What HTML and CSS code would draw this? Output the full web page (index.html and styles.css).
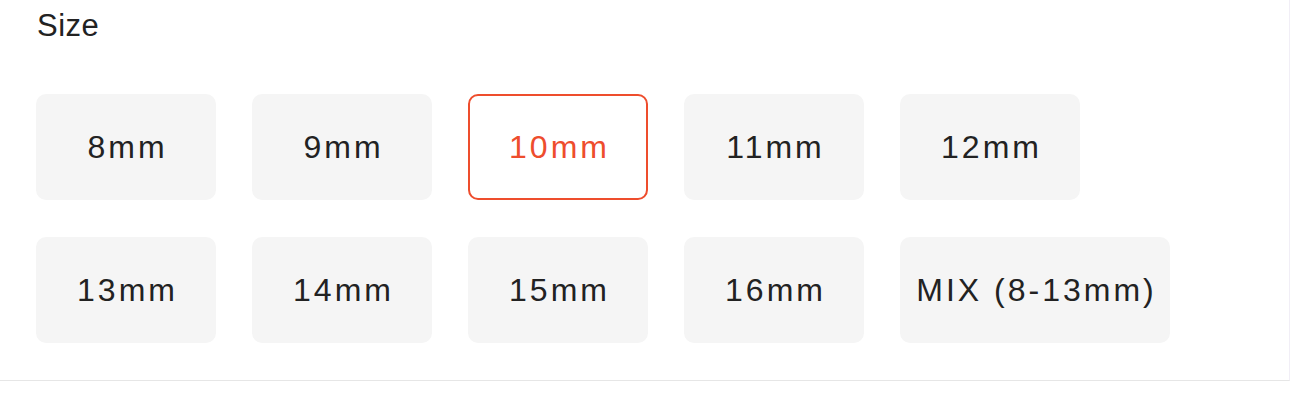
FILE: index.html
```html
<!DOCTYPE html>
<html lang="en">

<head>
    <meta charset="UTF-8">
    <meta name="viewport" content="width=device-width, initial-scale=1.0">
    <title>Size</title>
    <link rel="stylesheet" href="styles.css">
</head>

<body>
    <div class="panel">
        <div class="title">Size</div>
        <div class="options">
            <button class="option">8mm</button>
            <button class="option">9mm</button>
            <button class="option selected">10mm</button>
            <button class="option">11mm</button>
            <button class="option">12mm</button>
            <button class="option">13mm</button>
            <button class="option">14mm</button>
            <button class="option">15mm</button>
            <button class="option">16mm</button>
            <button class="option wide">MIX (8-13mm)</button>
        </div>
    </div>
</body>

</html>
```

FILE: styles.css
```css
body {
    margin: 0;
    padding: 0;
    background-color: #ffffff;
    font-family: 'Liberation Sans', Arial, sans-serif;
    color: #222222;
}

.panel {
    height: 381px;
    padding: 0 0 0 36px;
    border-bottom: 1px solid #e6e6e6;
    border-right: 1px solid #f1eef6;
    box-sizing: border-box;
}

.title {
    font-size: 31px;
    line-height: 48px;
    padding: 2px 0 0 1px;
    letter-spacing: 0.5px;
}

.options {
    display: flex;
    flex-wrap: wrap;
    column-gap: 36px;
    row-gap: 37px;
    width: 1140px;
    margin-top: 44px;
}

.option {
    width: 180px;
    height: 106px;
    border: 2px solid transparent;
    border-radius: 10px;
    background-color: #f5f5f5;
    color: #222222;
    font-family: 'Liberation Sans', Arial, sans-serif;
    font-size: 32px;
    letter-spacing: 3px;
    padding: 0 0 0 3px;
    cursor: pointer;
}

.option.selected {
    background-color: #ffffff;
    border-color: #ee4d2d;
    color: #ee4d2d;
}

.option.wide {
    width: 270px;
}
```
